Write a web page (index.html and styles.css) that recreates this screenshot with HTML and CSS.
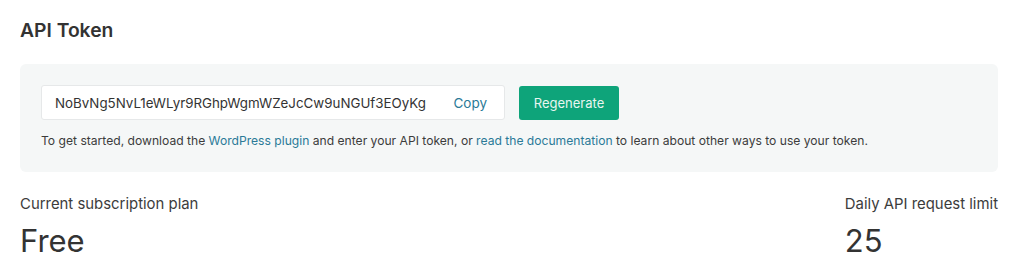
FILE: index.html
```html
<!DOCTYPE html>
<html>
<head>
<meta charset="utf-8">
<link rel="stylesheet" href="styles.css">
</head>
<body>
<div class="page">
  <h2 class="title">API Token</h2>
  <div class="panel">
    <div class="token-row">
      <div class="token-field">
        <span class="token">NoBvNg5NvL1eWLyr9RGhpWgmWZeJcCw9uNGUf3EOyKg</span>
        <span class="copy">Copy</span>
      </div>
      <button class="regen">Regenerate</button>
    </div>
    <p class="help">To get started, download the <a href="#">WordPress plugin</a> and enter your API token, or <a href="#">read the documentation</a> to learn about other ways to use your token.</p>
  </div>
  <div class="stats">
    <div class="stat">
      <div class="label">Current subscription plan</div>
      <div class="value">Free</div>
    </div>
    <div class="stat">
      <div class="label">Daily API request limit</div>
      <div class="value">25</div>
    </div>
  </div>
</div>
</body>
</html>
```

FILE: styles.css
```css
html, body {
  margin: 0;
  padding: 0;
  background: #ffffff;
}
body {
  font-family: Inter, "Noto Sans", sans-serif;
  color: #333333;
}
.page {
  padding: 18px 26px 0 20px;
}
.title {
  margin: 0;
  font-size: 19.3px;
  font-weight: 600;
  line-height: 24px;
  color: #333333;
}
.panel {
  margin-top: 22px;
  background: #f5f7f7;
  border-radius: 6px;
  padding: 21px 21px 23px 21px;
}
.token-row {
  display: flex;
  align-items: center;
  gap: 14px;
}
.token-field {
  display: flex;
  align-items: center;
  width: 462px;
  height: 33px;
  background: #ffffff;
  border: 1px solid #e6e8e9;
  border-radius: 3px;
  box-sizing: content-box;
}
.token {
  padding-left: 13px;
  font-size: 13.35px;
  color: #333333;
  flex: 1;
}
.copy {
  font-size: 13.5px;
  color: #2b7a97;
  padding-right: 17px;
}
.regen {
  width: 100px;
  height: 34px;
  border: none;
  border-radius: 3px;
  background: #0ea47a;
  color: #e8f6f0;
  font-family: Inter, "Noto Sans", sans-serif;
  font-size: 13px;
  padding: 0;
}
.help {
  margin: 13px 0 0 0;
  font-size: 12.12px;
  line-height: 16px;
  color: #3c3c3c;
}
.help a {
  color: #2b7a97;
  text-decoration: none;
}
.stats {
  display: flex;
  justify-content: space-between;
  margin-top: 23px;
}
.label {
  font-size: 14.9px;
  line-height: 18px;
  color: #3c3c3c;
}
.value {
  margin-top: 10px;
  font-size: 31px;
  line-height: 36px;
  color: #333333;
}
</style>
```
